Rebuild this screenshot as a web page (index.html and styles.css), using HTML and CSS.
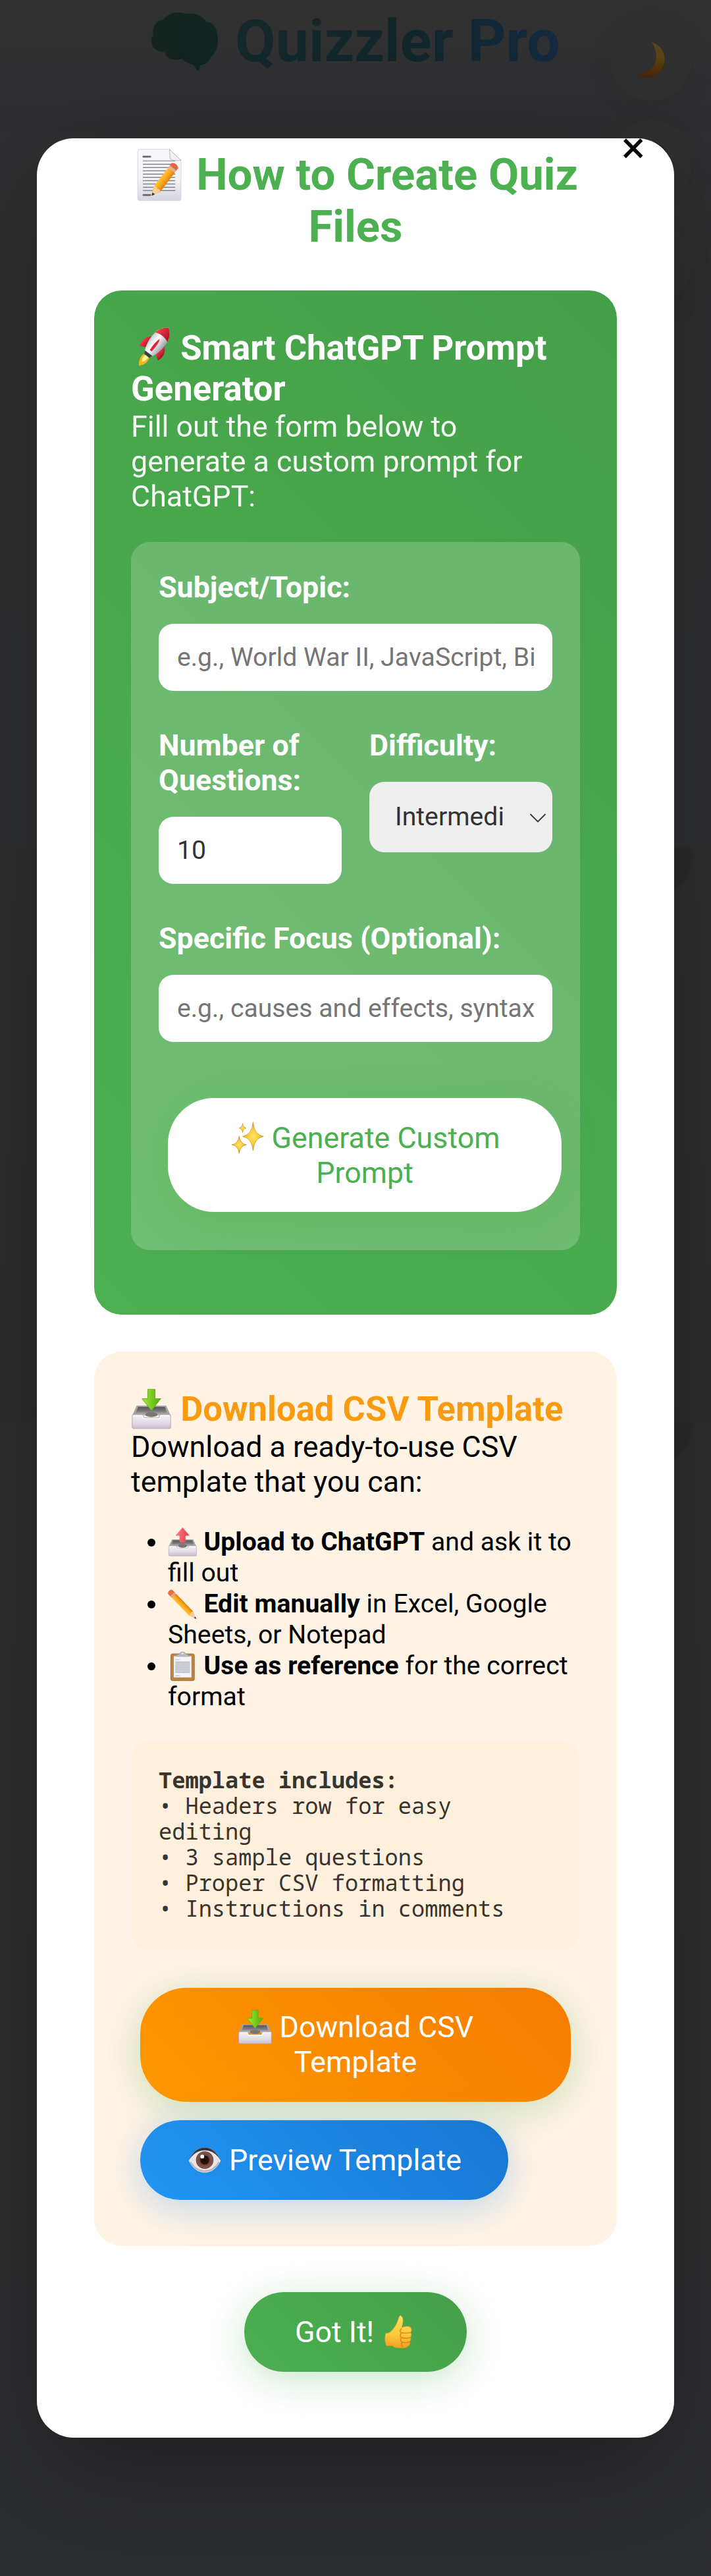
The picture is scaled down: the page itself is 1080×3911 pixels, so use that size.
FILE: index.html
```html
<!DOCTYPE html>
<html lang="en">
<head>
<meta charset="utf-8">
<title>Quizzler Pro</title>
<link rel="stylesheet" href="styles.css">
</head>
<body>
<svg class="defs" width="0" height="0" aria-hidden="true">
  <defs>
    <linearGradient id="paper" x1="0" y1="0" x2="0" y2="1"><stop offset="0" stop-color="#f8f8fb"/><stop offset=".6" stop-color="#f0f0f6"/><stop offset="1" stop-color="#d5d6e2"/></linearGradient>
    <linearGradient id="wood" x1="0" y1="0" x2="1" y2="0"><stop offset="0" stop-color="#ffc63c"/><stop offset=".5" stop-color="#fba81c"/><stop offset="1" stop-color="#e07f0c"/></linearGradient>
    <linearGradient id="tray" x1="0" y1="0" x2="0" y2="1"><stop offset="0" stop-color="#f4f2f6"/><stop offset=".6" stop-color="#e2dbe6"/><stop offset="1" stop-color="#c9bfd0"/></linearGradient>
    <linearGradient id="trayBack" x1="0" y1="0" x2="0" y2="1"><stop offset="0" stop-color="#565656"/><stop offset=".5" stop-color="#7b7b7b"/><stop offset="1" stop-color="#c2c2c2"/></linearGradient>
    <linearGradient id="green" x1="0" y1="0" x2="1" y2="0"><stop offset="0" stop-color="#a5e83a"/><stop offset="1" stop-color="#4fae06"/></linearGradient>
    <linearGradient id="red" x1="0" y1="0" x2="1" y2="0"><stop offset="0" stop-color="#ff7c87"/><stop offset="1" stop-color="#e8384c"/></linearGradient>
    <linearGradient id="hull" x1="0" y1="0" x2="1" y2="0"><stop offset="0" stop-color="#c9c9d1"/><stop offset=".4" stop-color="#ffffff"/><stop offset="1" stop-color="#9d9da8"/></linearGradient>
    <linearGradient id="redHull" x1="0" y1="0" x2="1" y2="0"><stop offset="0" stop-color="#f5404e"/><stop offset="1" stop-color="#a90f20"/></linearGradient>
    <radialGradient id="gold"><stop offset="0" stop-color="#ffe566"/><stop offset=".6" stop-color="#f8c92e"/><stop offset="1" stop-color="#d99a22"/></radialGradient>
    <radialGradient id="iris"><stop offset="0" stop-color="#1d0d08"/><stop offset=".48" stop-color="#2a130c"/><stop offset=".55" stop-color="#6d4239"/><stop offset=".9" stop-color="#85584c"/><stop offset="1" stop-color="#4a2a22"/></radialGradient>
    <linearGradient id="skin" x1="0" y1="0" x2="0" y2="1"><stop offset="0" stop-color="#ffe066"/><stop offset=".6" stop-color="#fdc83c"/><stop offset="1" stop-color="#eea024"/></linearGradient>
    <linearGradient id="moonFill" x1="0" y1="0" x2="0" y2="1"><stop offset="0" stop-color="#514a26"/><stop offset=".55" stop-color="#56410f"/><stop offset="1" stop-color="#4a230d"/></linearGradient>
    <linearGradient id="brainFill" x1="0" y1="0" x2="1" y2="0"><stop offset="0" stop-color="#15241d"/><stop offset="1" stop-color="#112524"/></linearGradient>
  </defs>
  <symbol id="inbox" viewBox="0 0 100 100">
    <path d="M14 42H86L97 66H3Z" fill="#a5a2a8"/>
    <path d="M17 45H83L90 66H10Z" fill="url(#trayBack)"/>
    <ellipse cx="50" cy="64" rx="15" ry="6" fill="#777"/>
    <path d="M3 66Q3 64 6 64H27Q30 64 31 68L32 72H68L69 68Q70 64 73 64H94Q97 64 97 66V95Q97 98 94 98H6Q3 98 3 95Z" fill="url(#tray)" stroke="#aaa3af" stroke-width="1.5"/>
    <path d="M6 67H27L30 74H70L73 67H94" fill="none" stroke="#fff" stroke-width="2"/>
  </symbol>
  <symbol id="download" viewBox="0 0 100 100">
    <use href="#inbox" width="100" height="100"/>
    <path d="M41 2H59V25H73L50 54L27 25H41Z" fill="url(#green)" stroke="#62a916" stroke-width="1.5"/>
  </symbol>
  <symbol id="upload" viewBox="0 0 100 100">
    <use href="#inbox" width="100" height="100"/>
    <path d="M50 2L73 29H60V50Q50 56 40 50V29H27Z" fill="url(#red)" stroke="#e0606c" stroke-width="1"/>
  </symbol>
  <symbol id="pencil" viewBox="0 0 100 100">
    <g transform="translate(7 7) rotate(-44)">
      <path d="M-10 4Q-10 -4 0 -4Q10 -4 10 4V16H-10Z" fill="#e8713f"/>
      <path d="M-10 12H10V21H-10Z" fill="#d9a58a"/>
      <path d="M-10 20H10V104H-10Z" fill="url(#wood)"/>
      <path d="M-10 103L0 130L10 103Q5 99 0 103Q-5 99-10 103Z" fill="#f2c99a"/>
      <path d="M-3 121L0 130L3 121Z" fill="#333"/>
    </g>
  </symbol>
</svg>

<header class="header">
  <h1 class="brand">
    <svg class="brand-icon" viewBox="0 0 101 88"><path fill="url(#brainFill)" d="M18 11C23 1 42-3 52 2C66-1 78 6 84 14C96 15 101 28 101 42C101 54 97 63 90 67C88 75 81 80 74 80C74 84 73 88 71 88C67 88 66 80 63 79C55 77 49 74 47 70C36 74 22 71 20 60C8 60 0 53 0 43C0 38 1 36 3 34C0 21 8 12 18 11Z"/></svg>
    <span class="brand-name">Quizzler Pro</span>
  </h1>
  <button class="fab fab-theme" aria-label="Theme">
    <svg width="44" height="56" viewBox="0 0 44 56"><path d="M22 1C36 6 43 16 43 28C42 47 30 55 15 55C9 55 4 53 0 49C24 51 39 28 22 1Z" fill="url(#moonFill)" stroke="#3c2a12" stroke-width=".8"/></svg>
  </button>
  <button class="fab fab-help" aria-label="Help"><span class="fab-dot"></span></button>
  <button class="fab fab-info" aria-label="Info"></button>
</header>

<div class="overlay">
  <main class="modal">
    <button class="close">×</button>
    <h2 class="title">
      <svg class="emoji" viewBox="0 0 100 100">
        <path d="M13 1H70L92 22V95Q92 99 88 99H13Q9 99 9 95V5Q9 1 13 1Z" fill="url(#paper)" stroke="#cfcfd8"/>
        <path d="M19 23H81M19 29.400H81M19 35.700H81M19 42H81M19 48.400H81M19 54.700H81M19 61H81M19 67.400H81M19 73.700H81M19 80H81" stroke="#77777d" stroke-width="1.500"/>
        <path d="M20 15H33M20 88.500H33" stroke="#66666d" stroke-width="3.500" stroke-linecap="round"/>
        <path d="M70 1L92 22Q78 24 71 19Z" fill="#f1f1f5" stroke="#a9a9b2"/>
        <g transform="translate(36 90) rotate(37.500)">
          <path d="M-1 0L-8 -16V-63H8V-16Z" fill="url(#wood)"/>
          <path d="M0 0L-8 -17Q-4 -20 0 -17Q4 -20 8 -17Z" fill="#f6cf9d"/>
          <path d="M0 0L-3 -6H3Z" fill="#333"/>
          <path d="M-8 -67H8V-62H-8Z" fill="#d9b29c"/>
          <path d="M-8 -67V-73Q0 -80 8 -73V-67Z" fill="#e4683c"/>
        </g>
      </svg>
      How to Create Quiz Files</h2>

    <section class="card card-prompt">
      <h3 class="card-title">
        <svg class="emoji" viewBox="0 0 100 100"><g transform="translate(60 42) rotate(38)">
          <path d="M-7 31Q-15 49 0 66Q15 49 7 31Z" fill="#fbb416"/>
          <path d="M-4 33Q-8 45 0 54Q8 45 4 33Z" fill="#fff3a0"/>
          <path d="M-15 -14Q-38 2 -29 27L-13 18Z" fill="url(#redHull)"/>
          <path d="M15 -14Q38 2 29 27L13 18Z" fill="url(#redHull)"/>
          <path d="M-12 22H12L8 35H-8Z" fill="#3c3c48"/>
          <path d="M0 -52Q20 -40 20 -12Q20 10 12 27H-12Q-20 10 -20 -12Q-20 -40 0 -52Z" fill="url(#hull)"/>
          <path d="M0 -52Q15 -43 19 -23Q0 -31 -19 -23Q-15 -43 0 -52Z" fill="url(#redHull)"/>
          <path d="M0 -17Q5 -8 3 19H-3Q-5 -8 0 -17Z" fill="#dc2638"/>
        </g></svg>
        Smart ChatGPT Prompt Generator</h3>
      <p class="lead lead-light">Fill out the form below to generate a custom prompt for ChatGPT:</p>
      <form class="form">
        <label class="field"><span class="label">Subject/Topic:</span>
          <input class="input" type="text" placeholder="e.g., World War II, JavaScript, Biology"></label>
        <div class="columns">
          <label class="field"><span class="label">Number of Questions:</span>
            <input class="input" type="text" value="10"></label>
          <label class="field"><span class="label">Difficulty:</span>
            <span class="select-wrap">
              <select class="select"><option>Intermediate</option></select>
              <svg class="chevron" width="26" height="14" viewBox="0 0 26 14"><path d="M1.500 1L13 12.500L24.500 1" fill="none" stroke="#333" stroke-width="1.800"/></svg>
            </span></label>
        </div>
        <label class="field"><span class="label">Specific Focus (Optional):</span>
          <input class="input" type="text" placeholder="e.g., causes and effects, syntax basics"></label>
        <button class="btn btn-generate" type="button">
          <svg class="emoji" viewBox="0 0 100 100" fill="url(#gold)" stroke="#c98f2c" stroke-width="1.500">
            <path d="M67 5Q70 41 97 46Q70 51 67 87Q64 51 37 46Q64 41 67 5Z"/>
            <path d="M37 9Q38 20 47 22Q38 24 37 35Q36 24 27 22Q36 20 37 9Z"/>
            <path d="M27 45Q29 67 48 70Q29 73 27 95Q25 73 6 70Q25 67 27 45Z"/>
          </svg>
          Generate Custom Prompt</button>
      </form>
    </section>

    <section class="card card-csv">
      <h3 class="card-title"><svg class="emoji"><use href="#download"/></svg> Download CSV Template</h3>
      <p class="lead">Download a ready-to-use CSV template that you can:</p>
      <ul class="list">
        <li><svg class="emoji"><use href="#upload"/></svg> <strong>Upload to ChatGPT</strong> and ask it to fill out</li>
        <li><svg class="emoji"><use href="#pencil"/></svg> <strong>Edit manually</strong> in Excel, Google Sheets, or Notepad</li>
        <li><svg class="emoji" viewBox="0 0 100 100">
          <rect x="10" y="8" width="80" height="91" rx="6" fill="#bd8440" stroke="#9c6729" stroke-width="2"/>
          <path d="M20 16H80V88H20Z" fill="#f4f5f9"/>
          <path d="M25 28H40M25 82H40" stroke="#a5acb8" stroke-width="2"/>
          <path d="M25 36H75M25 41H75M25 46H75M25 51H75M25 56H75M25 61H75M25 66H75M25 71H75" stroke="#8a91a0" stroke-width="2"/>
          <path d="M28 17Q28 10 39 9Q41 1 50 1Q59 1 61 9Q72 10 72 17Z" fill="#b9bcc0" stroke="#8b8e92"/>
          <circle cx="50" cy="7" r="3" fill="#eee"/>
        </svg> <strong>Use as reference</strong> for the correct format</li>
      </ul>
      <div class="template"><strong>Template includes:</strong><br>• Headers row for easy editing<br>• 3 sample questions<br>• Proper CSV formatting<br>• Instructions in comments</div>
      <div class="actions">
        <button class="btn btn-download"><svg class="emoji"><use href="#download"/></svg> Download CSV Template</button>
        <button class="btn btn-preview"><svg class="emoji" viewBox="0 0 100 100">
          <path d="M5 52Q22 14 51 14Q80 14 97 52Q80 86 51 86Q22 86 5 52Z" fill="#e9e4e8"/>
          <path d="M5 52Q22 14 51 14Q80 14 97 52Q80 22 51 22Q22 22 5 52Z" fill="#393437"/>
          <path d="M10 56Q26 82 51 82Q76 82 92 56" fill="none" stroke="#bdb3ba" stroke-width="4"/>
          <circle cx="51" cy="50" r="25" fill="url(#iris)"/>
          <circle cx="44" cy="40" r="5.500" fill="#fff"/>
        </svg> Preview Template</button>
      </div>
    </section>

    <button class="btn btn-done">Got It! <svg class="emoji" viewBox="0 0 100 100">
      <path d="M13 54Q26 54 33 43Q44 31 49 14Q51 3 56 3Q65 8 62 25L59 38Q64 34 74 34Q87 34 87 44Q87 50 84 52Q89 57 84 66Q87 72 82 78Q84 86 78 91Q71 97 55 96Q39 96 32 90H15Q8 72 13 54Z" fill="url(#skin)" stroke="#e3981f" stroke-width="1.500"/>
      <path d="M58 52Q70 55 84 52M58 66Q72 70 84 66M60 79Q70 83 82 78M59 40Q51 48 58 54Q52 60 58 67Q53 74 60 80Q56 87 62 94" fill="none" stroke="#d98c18" stroke-width="3"/>
    </svg></button>
  </main>
</div>
</body>
</html>
```
FILE: styles.css
```css
* { box-sizing: border-box; }

body {
  margin: 0;
  position: relative;
  height: 3911px;
  overflow: hidden;
  font-family: Roboto, "Liberation Sans", sans-serif;
  font-size: 44.8px;
  line-height: 53px;
  color: #000;
  background:
    radial-gradient(circle at 989px 13px, #2b2b2a 63px, transparent 64px) 0 1287px / 1080px 80px no-repeat,
    radial-gradient(circle at 989px 4px, #2b2b2a 63px, transparent 64px) 0 2159px / 1080px 80px no-repeat,
    linear-gradient(#2f2f2f, #2d2d2f) 0 1287px / 100% 872px no-repeat,
    linear-gradient(#2f2f2f, #2d2e31) 0 2159px / 100% 1752px no-repeat,
    linear-gradient(#303032, #2f3032) 0 0 / 100% 1287px no-repeat;
}

h1, h2, h3, p, ul { margin: 0; padding: 0; }
button, input, select { font-family: inherit; border: 0; margin: 0; }
.defs { position: absolute; }

.header {
  height: 200px;
  padding: 10px 228px 0 230px;
  background: linear-gradient(#313132, #2e2f31);
}
.brand { display: flex; align-items: flex-start; font-size: 89.6px; line-height: 105px; }
.brand-icon { flex: none; width: 101px; height: 88px; margin: 9px 26px 0 0; }
.brand-name {
  white-space: nowrap;
  color: transparent;
  background: linear-gradient(90deg, #14282a, #11262b 55%, #13293f);
  -webkit-background-clip: text;
  background-clip: text;
}

.fab {
  position: absolute;
  left: 926px;
  width: 126px;
  height: 126px;
  padding: 0;
  border-radius: 50%;
  background: #303031;
  box-shadow: 0 11px 42px rgba(0, 0, 0, .06);
}
.fab-theme { top: 27px; }
.fab-theme svg { position: absolute; left: 41px; top: 35px; }
.fab-help { top: 182px; }
.fab-info { top: 336px; }
.fab-dot { position: absolute; left: 35px; top: 34px; width: 56px; height: 56px; border-radius: 50%; background: #17282b; }

.overlay { position: absolute; inset: 0; padding: 210px 56px; }

.modal {
  position: relative;
  height: 3491px;
  padding: 16px 87px 0;
  background: #fff;
  border-radius: 56px;
  box-shadow: 0 56px 168px rgba(0, 0, 0, .35);
}
.close {
  position: absolute;
  right: 37px;
  top: -25px;
  width: 50px;
  padding: 0;
  background: none;
  text-align: center;
  font-size: 67.2px;
  line-height: 79px;
}

.emoji { width: 1.18em; height: 1.18em; margin: -.1em 0; vertical-align: -.15em; overflow: visible; }

.title {
  margin-bottom: 57px;
  text-align: center;
  font-size: 67.2px;
  line-height: 79px;
  color: #4caf50;
}

.card { border-radius: 42px; padding: 56px; }
.card-title { font-size: 52.600px; line-height: 62px; }
.card-prompt {
  height: 1554.500px;
  margin-bottom: 56.500px;
  color: #fff;
  background: linear-gradient(45deg, #4caf50, #45a049);
}
.lead-light { padding-right: 40px; opacity: .95; }

.form {
  display: flex;
  flex-direction: column;
  gap: 56px;
  height: 1075px;
  margin-top: 43px;
  padding: 42px;
  border-radius: 28px;
  background: rgba(255, 255, 255, .2);
}
.columns { display: grid; grid-template-columns: 1fr 1fr; gap: 42px; }
.field { display: flex; flex-direction: column; align-items: stretch; gap: 28.500px; min-width: 0; }
.label { font-weight: 700; }
.input, .select {
  width: 100%;
  height: 102.600px;
  padding: 0 28px;
  border-radius: 22.400px;
  background: #fff;
  color: #333;
  font-size: 39.200px;
}
.input::placeholder { color: #757575; opacity: 1; }
.select-wrap { position: relative; display: block; height: 107px; }
.select {
  appearance: none;
  display: block;
  height: 107px;
  padding: 0 72px 0 39px;
  background: #efefef;
}
.chevron { position: absolute; right: 9px; top: 48px; }

.btn {
  display: block;
  padding: 33.600px 70px;
  border-radius: 70px;
  text-align: center;
  font-size: 44.800px;
  line-height: 53px;
  color: #fff;
  box-shadow: 0 11.200px 56px rgba(76, 175, 80, .3);
}
.btn-generate { flex: none; margin: 29px -14px 0 14px; background: #fff; color: #4caf50; }

.card-csv { height: 1358px; margin-bottom: 70px; background: #fff3e5; }
.card-csv .card-title { color: #f99b10; }
.list { margin: 42px 0; padding-left: 56px; font-size: 39.200px; line-height: 47.100px; }
.list .emoji { width: 1.14em; height: 1.16em; }
.template {
  padding: 40px 42px 44px;
  border-radius: 28px;
  background: #fff0dd;
  color: #38342e;
  font-family: "Noto Sans Mono", "DejaVu Sans Mono", monospace;
  font-size: 33.700px;
  line-height: 39px;
}
.actions { display: flex; flex-direction: column; align-items: flex-start; gap: 28px; margin-top: 57px; padding: 0 14px; }
.btn-download { width: 100%; background: linear-gradient(45deg, #ff9800, #f57c00); }
.btn-preview { width: 559px; height: 121px; padding: 34px 0; background: linear-gradient(45deg, #2196f3, #1976d2); box-shadow: 0 11.200px 56px rgba(33, 150, 243, .3); }
.btn-done { width: 338px; height: 121px; margin: 0 auto; padding: 34px 0; background: linear-gradient(45deg, #4caf50, #45a049); }
```
